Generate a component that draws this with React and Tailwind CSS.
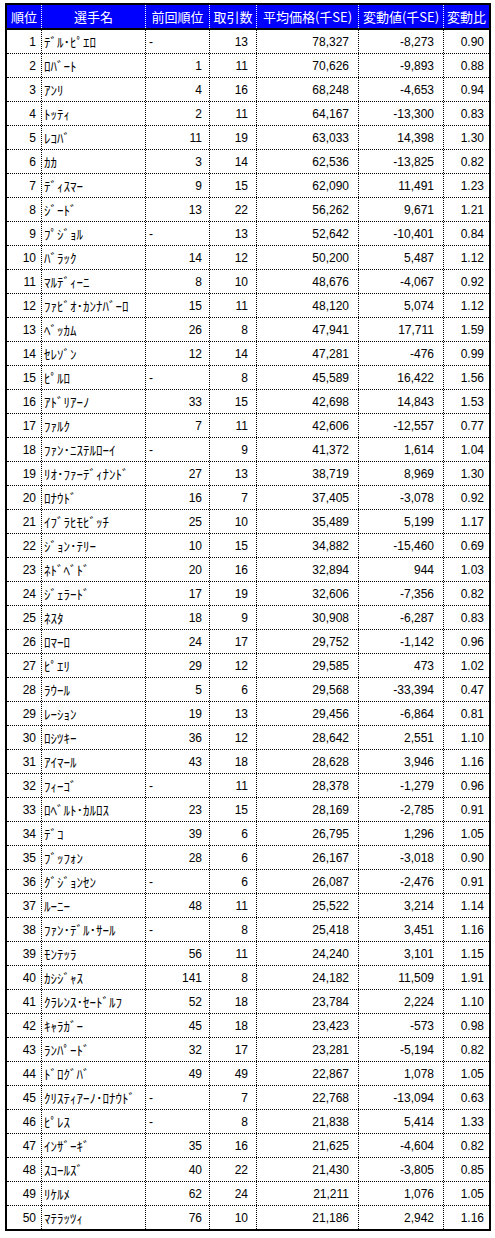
import React from 'react';

const rows = [
  [1, 'ﾃﾞﾙ･ﾋﾟｴﾛ', '-', 13, '78,327', '-8,273', '0.90'],
  [2, 'ﾛﾊﾞｰﾄ', 1, 11, '70,626', '-9,893', '0.88'],
  [3, 'ｱﾝﾘ', 4, 16, '68,248', '-4,653', '0.94'],
  [4, 'ﾄｯﾃｨ', 2, 11, '64,167', '-13,300', '0.83'],
  [5, 'ﾚｺﾊﾞ', 11, 19, '63,033', '14,398', '1.30'],
  [6, 'ｶｶ', 3, 14, '62,536', '-13,825', '0.82'],
  [7, 'ﾃﾞｨｽﾏｰ', 9, 15, '62,090', '11,491', '1.23'],
  [8, 'ｼﾞｰﾄﾞ', 13, 22, '56,262', '9,671', '1.21'],
  [9, 'ﾌﾟｼﾞｮﾙ', '-', 13, '52,642', '-10,401', '0.84'],
  [10, 'ﾊﾞﾗｯｸ', 14, 12, '50,200', '5,487', '1.12'],
  [11, 'ﾏﾙﾃﾞｨｰﾆ', 8, 10, '48,676', '-4,067', '0.92'],
  [12, 'ﾌｧﾋﾞｵ･ｶﾝﾅﾊﾞｰﾛ', 15, 11, '48,120', '5,074', '1.12'],
  [13, 'ﾍﾞｯｶﾑ', 26, 8, '47,941', '17,711', '1.59'],
  [14, 'ｾﾚｿﾞﾝ', 12, 14, '47,281', '-476', '0.99'],
  [15, 'ﾋﾟﾙﾛ', '-', 8, '45,589', '16,422', '1.56'],
  [16, 'ｱﾄﾞﾘｱｰﾉ', 33, 15, '42,698', '14,843', '1.53'],
  [17, 'ﾌｧﾙｸ', 7, 11, '42,606', '-12,557', '0.77'],
  [18, 'ﾌｧﾝ･ﾆｽﾃﾙﾛｰｲ', '-', 9, '41,372', '1,614', '1.04'],
  [19, 'ﾘｵ･ﾌｧｰﾃﾞｨﾅﾝﾄﾞ', 27, 13, '38,719', '8,969', '1.30'],
  [20, 'ﾛﾅｳﾄﾞ', 16, 7, '37,405', '-3,078', '0.92'],
  [21, 'ｲﾌﾞﾗﾋﾓﾋﾞｯﾁ', 25, 10, '35,489', '5,199', '1.17'],
  [22, 'ｼﾞｮﾝ･ﾃﾘｰ', 10, 15, '34,882', '-15,460', '0.69'],
  [23, 'ﾈﾄﾞﾍﾞﾄﾞ', 20, 16, '32,894', '944', '1.03'],
  [24, 'ｼﾞｪﾗｰﾄﾞ', 17, 19, '32,606', '-7,356', '0.82'],
  [25, 'ﾈｽﾀ', 18, 9, '30,908', '-6,287', '0.83'],
  [26, 'ﾛﾏｰﾛ', 24, 17, '29,752', '-1,142', '0.96'],
  [27, 'ﾋﾟｴﾘ', 29, 12, '29,585', '473', '1.02'],
  [28, 'ﾗｳｰﾙ', 5, 6, '29,568', '-33,394', '0.47'],
  [29, 'ﾚｰｼｮﾝ', 19, 13, '29,456', '-6,864', '0.81'],
  [30, 'ﾛｼﾂｷｰ', 36, 12, '28,642', '2,551', '1.10'],
  [31, 'ｱｲﾏｰﾙ', 43, 18, '28,628', '3,946', '1.16'],
  [32, 'ﾌｨｰｺﾞ', '-', 11, '28,378', '-1,279', '0.96'],
  [33, 'ﾛﾍﾞﾙﾄ･ｶﾙﾛｽ', 23, 15, '28,169', '-2,785', '0.91'],
  [34, 'ﾃﾞｺ', 39, 6, '26,795', '1,296', '1.05'],
  [35, 'ﾌﾞｯﾌｫﾝ', 28, 6, '26,167', '-3,018', '0.90'],
  [36, 'ｸﾞｼﾞｮﾝｾﾝ', '-', 6, '26,087', '-2,476', '0.91'],
  [37, 'ﾙｰﾆｰ', 48, 11, '25,522', '3,214', '1.14'],
  [38, 'ﾌｧﾝ･ﾃﾞﾙ･ｻｰﾙ', '-', 8, '25,418', '3,451', '1.16'],
  [39, 'ﾓﾝﾃｯﾗ', 56, 11, '24,240', '3,101', '1.15'],
  [40, 'ｶｼｼﾞｬｽ', 141, 8, '24,182', '11,509', '1.91'],
  [41, 'ｸﾗﾚﾝｽ･ｾｰﾄﾞﾙﾌ', 52, 18, '23,784', '2,224', '1.10'],
  [42, 'ｷｬﾗｶﾞｰ', 45, 18, '23,423', '-573', '0.98'],
  [43, 'ﾗﾝﾊﾟｰﾄﾞ', 32, 17, '23,281', '-5,194', '0.82'],
  [44, 'ﾄﾞﾛｸﾞﾊﾞ', 49, 49, '22,867', '1,078', '1.05'],
  [45, 'ｸﾘｽﾃｨｱｰﾉ･ﾛﾅｳﾄﾞ', '-', 7, '22,768', '-13,094', '0.63'],
  [46, 'ﾋﾟﾚｽ', '-', 8, '21,838', '5,414', '1.33'],
  [47, 'ｲﾝｻﾞｰｷﾞ', 35, 16, '21,625', '-4,604', '0.82'],
  [48, 'ｽｺｰﾙｽﾞ', 40, 22, '21,430', '-3,805', '0.85'],
  [49, 'ﾘｹﾙﾒ', 62, 24, '21,211', '1,076', '1.05'],
  [50, 'ﾏﾃﾗｯﾂｨ', 76, 10, '21,186', '2,942', '1.16'],
];

const headers = ['順位', '選手名', '前回順位', '取引数', '平均価格(千SE)', '変動値(千SE)', '変動比'];

const grid = 'grid grid-cols-[35px_104px_64px_47px_102px_85px_45px]';

const App = () => {
  return (
    <div className="min-h-screen bg-white pt-[3px] pl-[5px] font-['Liberation_Sans','Noto_Sans_CJK_JP',sans-serif] text-black">
      <div className="w-[486px] border-2 border-black">
        {/* Header */}
        <div className={`${grid} h-[25px] bg-[#0000ff] border-b-2 border-black text-white text-[13px] font-['Noto_Sans_CJK_JP',sans-serif]`}>
          {headers.map((h, i) => (
            <div
              key={h}
              className={`flex items-center justify-center whitespace-nowrap leading-none ${
                i < headers.length - 1 ? 'border-r border-dotted border-white' : ''
              }`}
            >
              {h}
            </div>
          ))}
        </div>

        {/* Rows */}
        {rows.map((r, idx) => {
          const last = idx === rows.length - 1;
          const rowCls = last ? 'h-[23px]' : 'h-[24px] border-b border-dotted border-black';
          const noPrev = r[2] === '-';
          return (
            <div key={r[0]} className={`${grid} ${rowCls} text-[12px] leading-none`}>
              <div className="flex items-center justify-end pr-[5px] border-r border-dotted border-black">{r[0]}</div>
              <div className="flex items-center pl-[2px] whitespace-nowrap border-r border-dotted border-black font-['Noto_Sans_CJK_JP',sans-serif] text-[13px]">
                {r[1]}
              </div>
              <div
                className={`flex items-center border-r border-dotted border-black ${
                  noPrev ? 'justify-start pl-[3px]' : 'justify-end pr-[7px]'
                }`}
              >
                {r[2]}
              </div>
              <div className="flex items-center justify-end pr-[8px] border-r border-dotted border-black">{r[3]}</div>
              <div className="flex items-center justify-end pr-[9px] border-r border-dotted border-black">{r[4]}</div>
              <div className="flex items-center justify-end pr-[9px] border-r border-dotted border-black">{r[5]}</div>
              <div className="flex items-center justify-end pr-[5px]">{r[6]}</div>
            </div>
          );
        })}
      </div>
    </div>
  );
};

export default App;
